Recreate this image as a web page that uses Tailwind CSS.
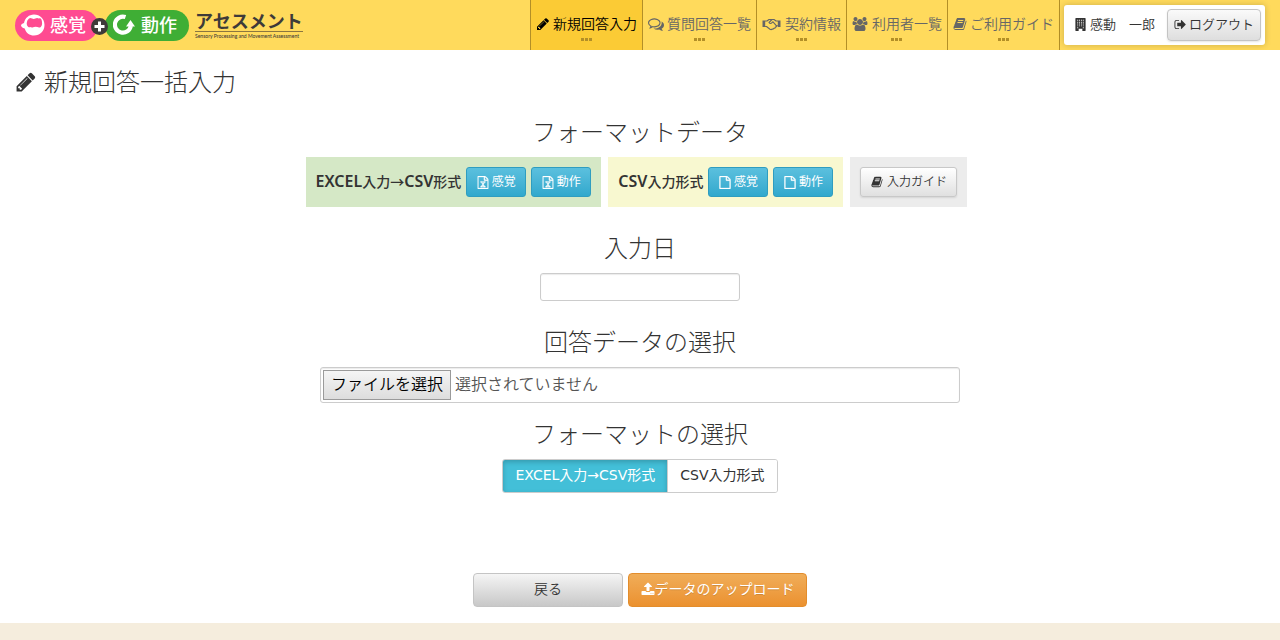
<!DOCTYPE html>
<html lang="ja">
<head>
<meta charset="utf-8">
<meta name="viewport" content="width=device-width, initial-scale=1">
<title>新規回答一括入力</title>
<script src="https://cdn.jsdelivr.net/npm/@tailwindcss/browser@4"></script>
</head>
<body class="min-h-screen flex flex-col bg-[#f5eddd] text-[#333333] text-sm font-[350] font-['Noto_Sans','Noto_Sans_CJK_JP',sans-serif]">
<svg class="hidden" aria-hidden="true">
  <symbol id="pencil" viewBox="0 0 1792 1792"><path d="M491 1536l91-91-235-235-91 91v107h128v128h107zm523-928q0-22-22-22-10 0-17 7l-542 542q-7 7-7 17 0 22 22 22 10 0 17-7l542-542q7-7 7-17zm-54-192l416 416-832 832h-416v-416zm683 96q0 53-37 90l-166 166-416-416 166-165q36-38 90-38 53 0 91 38l235 234q37 39 37 91z"/></symbol>
  <symbol id="comments" viewBox="0 0 1792 1792"><path d="M704 384q-153 0-286 52t-211.5 141-78.5 191q0 82 53 158t149 132l97 56-35 84q34-20 62-39l44-31 53 10q78 14 153 14 153 0 286-52t211.5-141 78.5-191-78.5-191-211.5-141-286-52zm0-128q191 0 353.5 68.5t256.5 186.5 94 257-94 257-256.5 186.5-353.5 68.5q-86 0-176-16-124 88-278 128-36 9-86 16h-3q-11 0-20.5-8t-11.5-21q-1-3-1-6.5t.5-6.5 2-6l2.5-5 3.5-5.5 4-5 4.5-5 4-4.5q5-6 23-25t26-29.5 22.5-29 25-38.5 20.5-44q-124-72-195-177t-71-224q0-139 94-257t256.5-186.5 353.5-68.5zm822 1169q10 24 20.5 44t25 38.5 22.5 29 26 29.5 23 25q1 1 4 4.5t4.5 5 4 5 3.5 5.5l2.5 5 2 6 .5 6.5-1 6.5q-3 14-13 22t-22 7q-50-7-86-16-154-40-278-128-90 16-176 16-271 0-472-132 58 4 88 4 161 0 309-45t264-129q125-92 192-212t67-254q0-77-23-152 129 71 204 178t75 230q0 120-71 224.5t-195 176.5z"/></symbol>
  <symbol id="handshake" viewBox="0 0 18 14"><g fill="none" stroke="currentColor" stroke-width="1.1" stroke-linejoin="round" stroke-linecap="round"><path d="M3 4h1.500L6.500 2.500H9M15 4h-1.500L11.500 2.500H9.500L6.500 5.500c.8 1.400 2.100 1.200 3 .1l1-.8 3.500 4"/><path d="M3 9.500h1l3.500 2.800c1 .6 1.700.2 2-.3 1 .4 1.700 0 1.900-.8 1 .2 1.500-.4 1.500-1.100.8 0 1.100-.6 1.100-1.300h1"/></g><path d="M0 3.500h2.700v6.500H0zM15.300 3.500H18v6.500h-2.700z"/></symbol>
  <symbol id="users" viewBox="0 0 1920 1792"><path d="M593 896q-162 5-265 128h-134q-82 0-138-40.500t-56-118.500q0-353 124-353 6 0 43.500 21t97.500 42.500 119 21.500q67 0 133-23-5 37-5 66 0 139 81 256zm1071 637q0 120-73 189.500t-194 69.500h-874q-121 0-194-69.500t-73-189.500q0-53 3.500-103.500t14-109 26.500-108.500 43-97.500 62-81 85.500-53.500 111.500-20q10 0 43 21.500t73 48 107 48 135 21.500 135-21.500 107-48 73-48 43-21.500q61 0 111.500 20t85.500 53.500 62 81 43 97.500 26.500 108.500 14 109 3.500 103.500zm-1024-1277q0 106-75 181t-181 75-181-75-75-181 75-181 181-75 181 75 75 181zm704 384q0 159-112.500 271.500t-271.500 112.500-271.500-112.500-112.500-271.500 112.500-271.500 271.500-112.500 271.500 112.500 112.500 271.500zm576 225q0 78-56 118.500t-138 40.500h-134q-103-123-265-128 81-117 81-256 0-29-5-66 66 23 133 23 59 0 119-21.500t97.500-42.500 43.500-21q124 0 124 353zm-128-609q0 106-75 181t-181 75-181-75-75-181 75-181 181-75 181 75 75 181z"/></symbol>
  <symbol id="book" viewBox="0 0 1792 1792"><path d="M1703 478q40 57 18 129l-275 906q-19 64-76.500 107.500t-122.500 43.500h-923q-77 0-148.500-53.500t-99.500-131.500q-24-67-2-127 0-4 3-27t4-37q1-8-3-21.500t-3-19.500q2-11 8-21t16.500-23.500 16.500-23.500q23-38 45-91.500t30-91.500q3-10 .5-30t-.5-28q3-11 17-28t17-23q21-36 42-92t25-90q1-9-2.500-32t.5-28q4-13 22-30.500t22-22.500q19-26 42.500-84.500t27.500-96.500q1-8-3-25.500t-2-26.500q2-8 9-18t18-23 17-21q8-12 16.500-30.500t15-35 16-36 19.500-32 26.500-23.500 36-11.500 47.500 5.500l-1 3q38-9 51-9h761q74 0 114 56t18 130l-274 906q-36 119-71.500 153.500t-128.500 34.500h-869q-27 0-38 15-11 16-1 43 24 70 144 70h923q29 0 56-15.500t35-41.500l300-987q7-22 5-57 38 15 59 43zm-1064 2q-4 13 2 22.500t20 9.500h608q13 0 25.500-9.500t16.500-22.500l21-64q4-13-2-22.500t-20-9.500h-608q-13 0-25.500 9.500t-16.500 22.500zm-83 256q-4 13 2 22.500t20 9.500h608q13 0 25.500-9.500t16.500-22.500l21-64q4-13-2-22.500t-20-9.500h-608q-13 0-25.500 9.500t-16.500 22.500z"/></symbol>
  <symbol id="building" viewBox="0 0 11 14"><path fill-rule="evenodd" d="M.5 0h10q.5 0 .5.500v13q0 .5-.5.500H7.500v-2.500h-4V14H.5q-.5 0-.5-.5V.5Q0 0 .5 0zM2 2v1h1V2zm2 0v1h1V2zm2 0v1h1V2zm2 0v1h1V2zM2 4v1h1V4zm2 0v1h1V4zm2 0v1h1V4zm2 0v1h1V4zM2 6v1h1V6zm2 0v1h1V6zm2 0v1h1V6zm2 0v1h1V6zM2 8v1h1V8zm2 0v1h1V8zm2 0v1h1V8zm2 0v1h1V8zM2 10v1h1v-1zm6 0v1h1v-1z"/></symbol>
  <symbol id="signout" viewBox="0 0 1664 1792"><path d="M704 1440q0 4 1 20t.5 26.500-3 23.500-10 19.500-20.500 6.500h-320q-119 0-203.500-84.500t-84.500-203.500v-704q0-119 84.500-203.500t203.500-84.500h320q13 0 22.500 9.500t9.500 22.500q0 4 1 20t.5 26.500-3 23.500-10 19.500-20.500 6.500h-320q-66 0-113 47t-47 113v704q0 66 47 113t113 47h312l11.500 1 11.500 3 8 5.500 7 9 2 13.500zm928-544q0 26-19 45l-544 544q-19 19-45 19t-45-19-19-45v-288h-448q-26 0-45-19t-19-45v-384q0-26 19-45t45-19h448v-288q0-26 19-45t45-19 45 19l544 544q19 19 19 45z"/></symbol>
  <symbol id="file" viewBox="128 0 1536 1792"><path stroke="currentColor" stroke-width="50" d="M1596 380q28 28 48 76t20 88v1152q0 40-28 68t-68 28h-1344q-40 0-68-28t-28-68v-1600q0-40 28-68t68-28h896q40 0 88 20t76 48zm-444-244v376h376q-10-29-22-41l-313-313q-12-12-41-22zm384 1528v-1024h-416q-40 0-68-28t-28-68v-416h-768v1536h1280z"/></symbol>
  <symbol id="excel" viewBox="128 0 1536 1792"><use href="#file" x="128" y="0" width="1536" height="1792"/><path stroke="currentColor" stroke-width="50" d="M560 768h290v107h-76l120 180 120-180h-74V768h279v107h-67l-195 282 192 273h68v106H926v-106h76l-115-170-110 170h75v106H571v-106h68l194-283-189-272h-84z"/></symbol>
  <symbol id="upload" viewBox="0 0 1792 1792"><path d="M1344 1472q0-26-19-45t-45-19-45 19-19 45 19 45 45 19 45-19 19-45zm256 0q0-26-19-45t-45-19-45 19-19 45 19 45 45 19 45-19 19-45zm128-224v320q0 40-28 68t-68 28h-1472q-40 0-68-28t-28-68v-320q0-40 28-68t68-28h427q21 56 70.500 92t110.500 36h256q61 0 110.500-36t70.500-92h427q40 0 68 28t28 68zm-325-648q-17 40-59 40h-256v448q0 26-19 45t-45 19h-256q-26 0-45-19t-19-45v-448h-256q-42 0-59-40-17-39 14-69l448-448q18-19 45-19t45 19l448 448q31 30 14 69z"/></symbol>
</svg>

<header class="h-[50px] flex justify-between bg-[#ffda5c]">
  <a href="#" class="flex items-center gap-[6px] pl-[15px]" aria-label="感覚+動作アセスメント">
    <span class="relative flex gap-[7px] h-[31px] text-white text-lg font-medium whitespace-nowrap">
      <span class="flex items-center gap-[5px] w-[83px] pl-[6px] rounded-full bg-[#ff4b91]">
        <svg class="w-[24px] h-[22px] shrink-0" viewBox="0 0 24 22"><path fill="#fff" d="M13 .5c6 0 10.500 4.500 10.500 10.500S19 21.500 13 21.500c-4.500 0-8-2.500-9.300-7C1.500 14 0 12.500 0 11.500S1.500 9.500 3 9C4 4 8 .5 13 .5z"/><path fill="#ff4b91" d="M8 4.500q1.500-.8 3 0 1.700.8 3.400 0 1.700-.8 3.400 0 1.700-.8 2.500.8 1 2 .8 4.400-.1 2-1.300 3.200-1.500 1-3.400.2-1.700-.7-3.400 0-1.700.7-3.200-.2-1.400.7-2.800-.2-1.400-1.200-1.300-3.400Q5.900 6 8 4.500z"/></svg>
        <span>感覚</span>
      </span>
      <span class="flex items-center gap-[5px] w-[84px] pl-[8px] rounded-full bg-[#3fae35]">
        <svg class="w-[23px] h-[22px] shrink-0" viewBox="0 0 23 22"><path fill="none" stroke="#fff" stroke-width="4.200" d="M12.500 3.100A8 8 0 1 0 17.800 12"/><path fill="#fff" d="M17.500 6l4.500 6.500h-9z"/></svg>
        <span>動作</span>
      </span>
      <svg class="absolute left-[76px] top-[8px] w-[17px] h-[17px]" viewBox="0 0 17 17"><circle cx="8.500" cy="8.500" r="8.500" fill="#3e3a39"/><path stroke="#fff" stroke-width="3" d="M8.500 3.500v10M3.500 8.500h10"/></svg>
    </span>
    <span class="flex flex-col text-[#3e3a39]">
      <span class="text-lg leading-5 font-bold border-b border-[#8b763f]">アセスメント</span>
      <span class="text-[5px] leading-[8px] font-medium font-['Lato',sans-serif]">Sensory Processing and Movement Assessment</span>
    </span>
  </a>
  <div class="flex">
    <nav class="flex text-[#666666] whitespace-nowrap">
      <a href="#" class="flex flex-col items-center border-l border-[#b38f27] bg-[#fbcb35] px-[5px] pt-[14px] text-black"><span class="flex items-center gap-[3px] leading-5"><svg class="size-[14px] fill-current"><use href="#pencil"/></svg>新規回答入力</span><span class="flex gap-px mt-[4px]"><i class="size-[3px] bg-[#b38f27]"></i><i class="size-[3px] bg-[#b38f27]"></i><i class="size-[3px] bg-[#b38f27]"></i></span></a>
      <a href="#" class="flex flex-col items-center border-l border-[#b38f27] px-[5px] pt-[14px]"><span class="flex items-center gap-[3px] leading-5"><svg class="size-[16px] fill-current"><use href="#comments"/></svg>質問回答一覧</span><span class="flex gap-px mt-[4px]"><i class="size-[3px] bg-[#b38f27]"></i><i class="size-[3px] bg-[#b38f27]"></i><i class="size-[3px] bg-[#b38f27]"></i></span></a>
      <a href="#" class="flex flex-col items-center border-l border-[#b38f27] px-[5px] pt-[14px]"><span class="flex items-center gap-[4px] leading-5"><svg class="w-[19px] h-[14px] fill-current"><use href="#handshake"/></svg>契約情報</span><span class="flex gap-px mt-[4px]"><i class="size-[3px] bg-[#b38f27]"></i><i class="size-[3px] bg-[#b38f27]"></i><i class="size-[3px] bg-[#b38f27]"></i></span></a>
      <a href="#" class="flex flex-col items-center border-l border-[#b38f27] px-[5px] pt-[14px]"><span class="flex items-center gap-[4px] leading-5"><svg class="w-[16px] h-[14px] fill-current"><use href="#users"/></svg>利用者一覧</span><span class="flex gap-px mt-[4px]"><i class="size-[3px] bg-[#b38f27]"></i><i class="size-[3px] bg-[#b38f27]"></i><i class="size-[3px] bg-[#b38f27]"></i></span></a>
      <a href="#" class="flex flex-col items-center border-x border-[#b38f27] px-[5px] pt-[14px]"><span class="flex items-center gap-[3px] leading-5"><svg class="size-[14px] fill-current"><use href="#book"/></svg>ご利用ガイド</span><span class="flex gap-px mt-[4px]"><i class="size-[3px] bg-[#b38f27]"></i><i class="size-[3px] bg-[#b38f27]"></i><i class="size-[3px] bg-[#b38f27]"></i></span></a>
    </nav>
    <div class="flex items-center gap-3 h-10 my-[5px] ml-1 mr-[15px] pl-[11px] pr-1 rounded-[3px] bg-white shadow-[0_0_6px_rgba(0,0,0,0.2)] text-[13px]">
      <span class="flex items-center gap-1 pb-[2px]"><svg class="w-[11px] h-[13px] fill-current"><use href="#building"/></svg>感動　一郎</span>
      <button type="button" class="flex items-center gap-[3px] h-8 px-[6px] pb-[2px] rounded border border-[#c4c4c4] bg-linear-to-b from-[#fafafa] to-[#dedede] shadow-[0_1px_2px_rgba(0,0,0,0.1)]"><svg class="w-[12px] h-[13px] fill-current"><use href="#signout"/></svg>ログアウト</button>
    </div>
  </div>
</header>

<main class="bg-white pb-4">
  <h1 class="flex items-center gap-[7px] pl-[15px] pt-[12px] text-2xl leading-10 font-light"><svg class="size-[22px] fill-current"><use href="#pencil"/></svg>新規回答一括入力</h1>
  <form class="flex flex-col items-center">
    <h2 class="mt-[10px] text-2xl leading-10 font-light">フォーマットデータ</h2>
    <div class="flex gap-[7px] mt-[5px] mr-[7px]">
      <div class="flex items-center gap-[5px] h-[50px] px-[10px] bg-[#d5e8c6]">
        <strong class="pb-[2px] leading-5 font-medium"><span class="text-base leading-5 font-semibold">EXCEL</span>入力→<span class="text-base leading-5 font-semibold">CSV</span>形式</strong>
        <button type="button" class="flex items-center justify-center gap-[3px] w-[60px] h-[30px] rounded-[3px] border border-[#2f9dc0] bg-linear-to-b from-[#5bc0de] to-[#30a8cd] text-white text-xs font-normal"><svg class="w-[12px] h-[13px] fill-current"><use href="#excel"/></svg>感覚</button>
        <button type="button" class="flex items-center justify-center gap-[3px] w-[60px] h-[30px] rounded-[3px] border border-[#2f9dc0] bg-linear-to-b from-[#5bc0de] to-[#30a8cd] text-white text-xs font-normal"><svg class="w-[12px] h-[13px] fill-current"><use href="#excel"/></svg>動作</button>
      </div>
      <div class="flex items-center gap-[5px] h-[50px] px-[10px] bg-[#f8f8d0]">
        <strong class="pb-[2px] leading-5 font-medium"><span class="text-base leading-5 font-semibold">CSV</span>入力形式</strong>
        <button type="button" class="flex items-center justify-center gap-[3px] w-[60px] h-[30px] rounded-[3px] border border-[#2f9dc0] bg-linear-to-b from-[#5bc0de] to-[#30a8cd] text-white text-xs font-normal"><svg class="w-[12px] h-[13px] fill-current"><use href="#file"/></svg>感覚</button>
        <button type="button" class="flex items-center justify-center gap-[3px] w-[60px] h-[30px] rounded-[3px] border border-[#2f9dc0] bg-linear-to-b from-[#5bc0de] to-[#30a8cd] text-white text-xs font-normal"><svg class="w-[12px] h-[13px] fill-current"><use href="#file"/></svg>動作</button>
      </div>
      <div class="flex items-center h-[50px] px-[10px] bg-[#ececec]">
        <button type="button" class="flex items-center justify-center gap-1 w-[97px] h-[30px] rounded-[3px] border border-[#c8c8c8] bg-linear-to-b from-white to-[#e0e0e0] shadow-[0_1px_2px_rgba(0,0,0,0.1)] text-xs"><svg class="size-[12px] fill-current"><use href="#book"/></svg>入力ガイド</button>
      </div>
    </div>
    <label for="date" class="mt-[21px] text-2xl leading-10 font-light">入力日</label>
    <input id="date" type="text" class="mt-[5px] w-[200px] h-7 px-2 rounded-[3px] border border-[#cccccc] bg-white shadow-[inset_0_1px_1px_rgba(0,0,0,0.08)]">
    <label for="file-pick" class="mt-[21px] text-2xl leading-10 font-light">回答データの選択</label>
    <div class="flex items-center gap-1 mt-[5px] w-1/2 h-9 px-[2px] rounded-[3px] border border-[#cccccc] shadow-[inset_0_1px_1px_rgba(0,0,0,0.08)] text-base text-[#555555]">
      <button id="file-pick" type="button" class="h-[30px] px-[7px] pb-[2px] border border-[#9a9a9a] bg-linear-to-b from-[#f5f5f5] to-[#dddddd] text-black">ファイルを選択</button>
      <span class="pb-[2px]">選択されていません</span>
    </div>
    <h2 class="mt-[11px] text-2xl leading-10 font-light">フォーマットの選択</h2>
    <div role="group" aria-label="フォーマットの選択" class="flex mt-[5px] h-[34px] rounded-[3px] border border-[#cccccc] overflow-hidden font-normal font-['DejaVu_Sans','Noto_Sans_CJK_JP',sans-serif]">
      <button type="button" aria-pressed="true" class="px-3 pb-[2px] border-r border-[#cccccc] bg-[#43bfd8] text-white shadow-[inset_0_2px_5px_rgba(0,0,0,0.2)]">EXCEL入力→CSV形式</button>
      <button type="button" aria-pressed="false" class="px-3 pb-[2px] bg-white">CSV入力形式</button>
    </div>
    <div class="flex gap-[5px] mt-20">
      <button type="button" class="w-[150px] h-[34px] pb-[2px] rounded border border-[#c4c4c4] bg-linear-to-b from-[#f5f5f5] to-[#c8c8c8]">戻る</button>
      <button type="submit" class="flex items-center justify-center w-[179px] h-[34px] pb-[2px] rounded border border-[#e38d2c] bg-linear-to-b from-[#f0ad58] to-[#eb912e] text-white font-normal text-shadow-2xs"><svg class="size-[14px] fill-current"><use href="#upload"/></svg>データのアップロード</button>
    </div>
  </form>
</main>
</body>
</html>
